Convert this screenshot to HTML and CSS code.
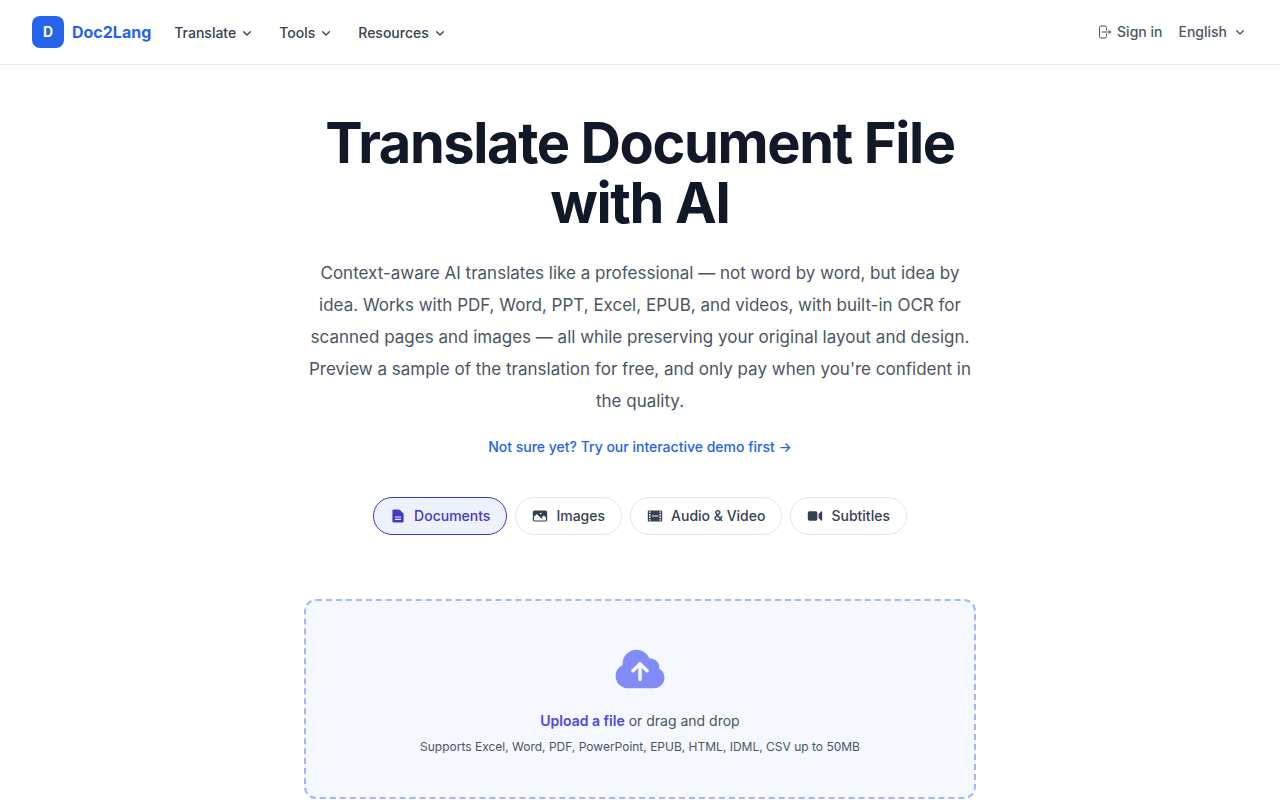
FILE: index.html
```html
<!DOCTYPE html>
<html lang="en">
<head>
<meta charset="utf-8">
<meta name="viewport" content="width=device-width, initial-scale=1">
<title>Doc2Lang</title>
<link rel="stylesheet" href="styles.css">
</head>
<body>
<header class="header">
  <a class="brand" href="#"><span class="brand-mark">D</span><span>Doc2Lang</span></a>
  <nav class="nav">
    <button class="nav-item" type="button">Translate <svg class="chevron" viewBox="0 0 24 24"><path d="M17 10l-5 5-5-5"/></svg></button>
    <button class="nav-item" type="button">Tools <svg class="chevron" viewBox="0 0 24 24"><path d="M17 10l-5 5-5-5"/></svg></button>
    <button class="nav-item" type="button">Resources <svg class="chevron" viewBox="0 0 24 24"><path d="M17 10l-5 5-5-5"/></svg></button>
  </nav>
  <div class="account">
    <a class="sign-in" href="#"><svg class="icon-line" viewBox="0 0 24 24"><path d="M15.75 9V5.25A2.25 2.25 0 0 0 13.5 3h-6a2.25 2.25 0 0 0-2.25 2.25v13.5A2.25 2.25 0 0 0 7.5 21h6a2.25 2.25 0 0 0 2.25-2.25V15m3 0 3-3m0 0-3-3m3 3H9"/></svg>Sign in</a>
    <button class="language" type="button">English <svg class="chevron" viewBox="0 0 24 24"><path d="M17 10l-5 5-5-5"/></svg></button>
  </div>
</header>
<main class="hero">
  <h1 class="title">Translate Document File with AI</h1>
  <p class="lead">Context-aware AI translates like a professional — not word by word, but idea by idea. Works with PDF, Word, PPT, Excel, EPUB, and videos, with built-in OCR for scanned pages and images — all while preserving your original layout and design. Preview a sample of the translation for free, and only pay when you're confident in the quality.</p>
  <a class="demo-link" href="#">Not sure yet? Try our interactive demo first →</a>
  <div class="tabs">
    <button class="tab tab-active" type="button"><svg class="icon-solid" viewBox="0 0 20 20"><path fill-rule="evenodd" d="M4.500 2A1.500 1.500 0 0 0 3 3.500v13A1.500 1.500 0 0 0 4.500 18h11a1.500 1.500 0 0 0 1.500-1.500V7.621a1.500 1.500 0 0 0-.44-1.060l-4.120-4.122A1.500 1.500 0 0 0 11.378 2H4.500zm2.250 8.500a.75.75 0 0 0 0 1.500h6.500a.75.75 0 0 0 0-1.500h-6.500zm0 3a.75.75 0 0 0 0 1.500h6.500a.75.75 0 0 0 0-1.500h-6.500z"/></svg>Documents</button>
    <button class="tab" type="button"><svg class="icon-solid" viewBox="0 0 20 20"><path fill-rule="evenodd" d="M1 5.250A2.250 2.250 0 0 1 3.250 3h13.500A2.250 2.250 0 0 1 19 5.250v9.500A2.250 2.250 0 0 1 16.750 17H3.250A2.250 2.250 0 0 1 1 14.750v-9.500zm1.500 5.810v3.690c0 .414.336.75.75.75h13.500a.75.75 0 0 0 .75-.75v-2.690l-2.220-2.219a.75.75 0 0 0-1.060 0l-1.910 1.909.47.47a.75.75 0 1 1-1.060 1.060L6.530 8.091a.75.75 0 0 0-1.060 0l-2.970 2.970zM12 7a1 1 0 1 1-2 0 1 1 0 0 1 2 0z"/></svg>Images</button>
    <button class="tab" type="button"><svg class="icon-solid" viewBox="0 0 20 20"><path fill-rule="evenodd" d="M2.500 3h15A1.500 1.500 0 0 1 19 4.500v11a1.500 1.500 0 0 1-1.500 1.500h-15A1.500 1.500 0 0 1 1 15.500v-11A1.500 1.500 0 0 1 2.500 3zM2.500 4.500v1.500h2v-1.500zm0 3v1.750h2v-1.750zm0 3.250v1.750h2v-1.750zm0 3.250v1.500h2v-1.500zM15.500 4.500v1.500h2v-1.500zm0 3v1.750h2v-1.750zm0 3.250v1.750h2v-1.750zm0 3.250v1.500h2v-1.500zM6.750 9.250a.75.75 0 0 0 0 1.500h6.500a.75.75 0 0 0 0-1.500z"/></svg>Audio &amp; Video</button>
    <button class="tab" type="button"><svg class="icon-solid" viewBox="0 0 20 20"><path d="M3.250 4A2.250 2.250 0 0 0 1 6.250v7.500A2.250 2.250 0 0 0 3.250 16h7.500A2.250 2.250 0 0 0 13 13.750v-7.500A2.250 2.250 0 0 0 10.750 4h-7.500zM19 4.750a.75.75 0 0 0-1.280-.53l-3 3a.75.75 0 0 0-.22.53v4.500c0 .199.079.39.22.53l3 3a.75.75 0 0 0 1.280-.53V4.750z"/></svg>Subtitles</button>
  </div>
  <section class="dropzone">
    <svg class="cloud" viewBox="0 0 24 24"><path fill-rule="evenodd" d="M10.500 3.750a6 6 0 0 0-5.980 6.496A5.250 5.250 0 0 0 6.750 20.250H18a4.500 4.500 0 0 0 2.206-8.423 3.750 3.750 0 0 0-4.133-4.303A6.001 6.001 0 0 0 10.500 3.750zm2.030 5.470a.75.75 0 0 0-1.060 0l-3 3a.75.75 0 1 0 1.060 1.060l1.720-1.720v4.940a.75.75 0 0 0 1.500 0v-4.940l1.720 1.720a.75.75 0 1 0 1.060-1.060l-3-3z"/></svg>
    <p class="drop-text"><button class="upload" type="button">Upload a file</button> or drag and drop</p>
    <p class="formats">Supports Excel, Word, PDF, PowerPoint, EPUB, HTML, IDML, CSV up to 50MB</p>
  </section>
</main>
</body>
</html>
```
FILE: styles.css
```css
*, *::before, *::after { box-sizing: border-box; }
body { margin: 0; font-family: Inter, "Liberation Sans", sans-serif; font-size: 14px; line-height: 20px; color: #374151; background: #fff; }
h1, p { margin: 0; }
a { text-decoration: none; }
button { margin: 0; padding: 0; border: 0; background: none; font: inherit; color: inherit; cursor: pointer; }
svg { display: block; flex: none; }

.header { display: flex; align-items: center; height: 65px; padding: 0 32px; border-bottom: 1px solid #e5e7eb; }
.brand { display: flex; align-items: center; gap: 8px; font-size: 16px; line-height: 24px; font-weight: 700; color: #2563eb; }
.brand-mark { display: grid; place-items: center; width: 32px; height: 32px; border-radius: 8px; background: #2563eb; color: #fff; font-size: 14px; }
.nav { display: flex; gap: 24px; margin-left: 23px; padding-top: 2px; }
.nav-item { display: flex; align-items: center; gap: 3px; font-weight: 500; }
.chevron { width: 16px; height: 16px; fill: none; stroke: currentColor; stroke-width: 2; stroke-linecap: round; stroke-linejoin: round; }
.account { display: flex; align-items: center; gap: 16px; margin-left: auto; font-weight: 500; color: #4b5563; }
.sign-in { display: flex; align-items: center; gap: 5px; color: inherit; }
.icon-line { width: 16px; height: 16px; fill: none; stroke: currentColor; stroke-width: 1.5; stroke-linecap: round; stroke-linejoin: round; }
.language { display: flex; align-items: center; gap: 5px; }

.hero { display: flex; flex-direction: column; align-items: center; max-width: 672px; margin: 0 auto; padding-top: 48px; text-align: center; }
.title { font-size: 56px; line-height: 60px; font-weight: 700; letter-spacing: -0.025em; color: #111827; }
.lead { margin-top: 24px; font-size: 17px; line-height: 32px; color: #4b5563; }
.demo-link { margin-top: 20px; font-weight: 500; color: #2563eb; }
.tabs { display: flex; flex-wrap: wrap; justify-content: center; gap: 8px; margin-top: 40px; }
.tab { display: flex; align-items: center; gap: 8px; padding: 8px 16px; border: 1px solid #e5e7eb; border-radius: 20px; background: #fff; font-weight: 500; }
.tab-active { border-color: #4338ca; background: #eef2ff; color: #4338ca; }
.icon-solid { width: 16px; height: 16px; fill: currentColor; }

.dropzone { width: 100%; margin-top: 64px; padding: 40px; border: 2px dashed #a5b4fc; border-radius: 12px; background: #f5f8ff; }
.cloud { width: 56px; height: 56px; margin: 0 auto; fill: #818cf8; }
.drop-text { margin-top: 12px; line-height: 24px; color: #4b5563; }
.upload { font-weight: 600; color: #4f46e5; }
.formats { margin-top: 4px; font-size: 12px; line-height: 20px; color: #4b5563; }
```
